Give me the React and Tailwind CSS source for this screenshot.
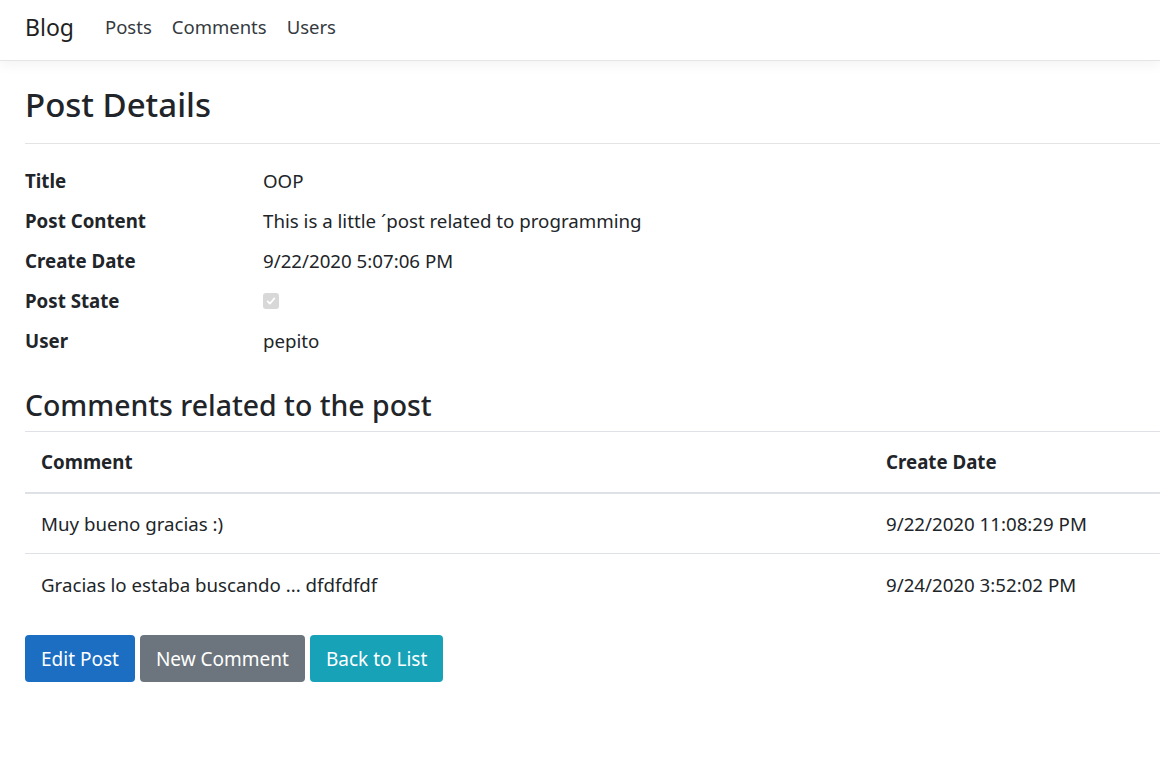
import React from "react";

const details = [
  { label: "Title", value: "OOP" },
  { label: "Post Content", value: "This is a little ´post related to programming" },
  { label: "Create Date", value: "9/22/2020 5:07:06 PM" },
  { label: "Post State", value: null },
  { label: "User", value: "pepito" },
];

const comments = [
  { text: "Muy bueno gracias :)", date: "9/22/2020 11:08:29 PM" },
  { text: "Gracias lo estaba buscando ... dfdfdfdf", date: "9/24/2020 3:52:02 PM" },
];

const CheckedBox = () => (
  <span className="inline-flex h-[16px] w-[16px] items-center justify-center rounded-[3px] bg-[#d8d8d8] align-middle">
    <svg viewBox="0 0 16 16" className="h-[12px] w-[12px]" fill="none" stroke="#ffffff" strokeWidth="2.2" strokeLinecap="round" strokeLinejoin="round">
      <path d="M3.5 8.5l3 3 6-7" />
    </svg>
  </span>
);

const App = () => {
  return (
    <div className="min-h-[772px] bg-white text-[#212529]" style={{ fontFamily: '"Noto Sans", "Open Sans", sans-serif' }}>
      <nav className="flex h-[61px] items-center border-b border-[#e5e5e5] bg-white pb-[6px] pl-[25px] shadow-[0_4px_12px_rgba(0,0,0,0.05)]">
        <a className="mr-[31px] text-[23px] text-[#1f1f1f]">Blog</a>
        <ul className="flex items-center gap-[20px] text-[18.5px] text-[#343a40]">
          <li>Posts</li>
          <li>Comments</li>
          <li>Users</li>
        </ul>
      </nav>

      <main className="pl-[25px]">
        <h1 className="pt-[20px] text-[33px] font-medium leading-[48px]">Post Details</h1>
        <hr className="mt-[14px] border-t border-[#e3e3e3]" />

        <dl className="pt-[17px]">
          {details.map((d) => (
            <div key={d.label} className="flex h-[40px] items-center text-[18.7px]">
              <dt className="w-[238px] font-bold">{d.label}</dt>
              <dd className="flex items-center">{d.value === null ? <CheckedBox /> : d.value}</dd>
            </div>
          ))}
        </dl>

        <h2 className="mt-[26px] text-[28.4px] font-medium leading-[36px]">Comments related to the post</h2>

        <table className="mt-[8px] w-full border-collapse text-[18.7px]">
          <thead>
            <tr className="border-t border-[#dee2e6]">
              <th className="h-[61px] w-[845px] border-b-2 border-[#dee2e6] px-[16px] text-left font-bold">Comment</th>
              <th className="h-[61px] border-b-2 border-[#dee2e6] px-[16px] text-left font-bold">Create Date</th>
            </tr>
          </thead>
          <tbody>
            {comments.map((c, idx) => (
              <tr key={idx} className={idx > 0 ? "border-t border-[#dee2e6]" : ""}>
                <td className="h-[61px] px-[16px] pt-[2px]">{c.text}</td>
                <td className="h-[61px] px-[16px] pt-[2px]">{c.date}</td>
              </tr>
            ))}
          </tbody>
        </table>

        <div className="mt-[20px] flex gap-[5px] text-[19px] text-white">
          <button className="h-[47px] rounded-[4px] bg-[#1b6ec2] px-[16px] pt-[2px]">Edit Post</button>
          <button className="h-[47px] rounded-[4px] bg-[#6c757d] px-[16px] pt-[2px]">New Comment</button>
          <button className="h-[47px] rounded-[4px] bg-[#17a2b8] px-[16px] pt-[2px]">Back to List</button>
        </div>
      </main>
    </div>
  );
};

export default App;
